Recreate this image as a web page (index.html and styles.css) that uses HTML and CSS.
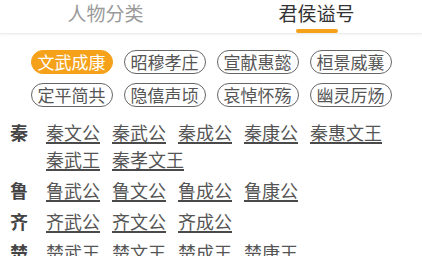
FILE: index.html
```html
<!DOCTYPE html>
<html lang="zh">
<head>
<meta charset="utf-8">
<link rel="stylesheet" href="styles.css">
</head>
<body>
<div class="tabs">
  <div class="tab"><span class="tab-text">人物分类</span><span class="bar"></span></div>
  <div class="tab active"><span class="tab-text">君侯谥号</span><span class="bar"></span></div>
</div>
<div class="tags">
  <div class="tag-row">
    <span class="tag on">文武成康</span>
    <span class="tag">昭穆孝庄</span>
    <span class="tag">宣献惠懿</span>
    <span class="tag">桓景威襄</span>
  </div>
  <div class="tag-row">
    <span class="tag">定平简共</span>
    <span class="tag">隐僖声顷</span>
    <span class="tag">哀悼怀殇</span>
    <span class="tag">幽灵厉炀</span>
  </div>
</div>
<div class="groups">
  <div class="group">
    <span class="label">秦</span>
    <div class="links">
      <span class="link">秦文公</span><span class="link">秦武公</span><span class="link">秦成公</span><span class="link">秦康公</span><span class="link">秦惠文王</span><span class="link">秦武王</span><span class="link">秦孝文王</span>
    </div>
  </div>
  <div class="group">
    <span class="label">鲁</span>
    <div class="links">
      <span class="link">鲁武公</span><span class="link">鲁文公</span><span class="link">鲁成公</span><span class="link">鲁康公</span>
    </div>
  </div>
  <div class="group">
    <span class="label">齐</span>
    <div class="links">
      <span class="link">齐武公</span><span class="link">齐文公</span><span class="link">齐成公</span>
    </div>
  </div>
  <div class="group">
    <span class="label">楚</span>
    <div class="links">
      <span class="link">楚武王</span><span class="link">楚文王</span><span class="link">楚成王</span><span class="link">楚康王</span>
    </div>
  </div>
</div>
</body>
</html>
```
FILE: styles.css
```css
html, body {
  margin: 0;
  padding: 0;
  background: #fff;
  overflow: hidden;
}
body {
  font-family: "Noto Sans CJK SC", "Noto Sans", sans-serif;
  width: 422px;
  height: 256px;
}
.tabs {
  display: flex;
  padding-top: 1px;
  border-bottom: 1px solid #ececec;
  box-shadow: 0 1px 3px rgba(0,0,0,0.05);
}
.tab {
  flex: 1;
  display: flex;
  flex-direction: column;
  align-items: center;
}
.tab-text {
  font-size: 19px;
  line-height: 23px;
  color: #9a9a9a;
}
.bar {
  width: 42px;
  height: 4px;
  margin-top: 5px;
  border-radius: 2px;
  background: transparent;
}
.tab.active .tab-text { color: #333; }
.tab.active .bar { background: #f5a11a; }

.tags {
  padding-top: 16px;
  display: flex;
  flex-direction: column;
  gap: 9px;
}
.tag-row {
  display: flex;
  justify-content: center;
  gap: 11px;
}
.tag {
  font-size: 17px;
  line-height: 22px;
  padding: 0 6px;
  border: 1px solid #666;
  border-radius: 12px;
  color: #555;
}
.tag.on {
  background: #f5a11a;
  border-color: #f5a11a;
  color: #fff;
}

.groups {
  padding: 15px 10px 0 10px;
}
.group {
  display: flex;
  align-items: flex-start;
  margin-bottom: 9px;
}
.label {
  width: 18px;
  margin-right: 18px;
  font-size: 18px;
  line-height: 20px;
  font-weight: bold;
  color: #444;
  flex: none;
}
.links {
  display: flex;
  flex-wrap: wrap;
  column-gap: 12px;
  row-gap: 5px;
}
.link {
  font-size: 18px;
  line-height: 20px;
  color: #555;
  border-bottom: 2px solid #4a4a4a;
}
```
